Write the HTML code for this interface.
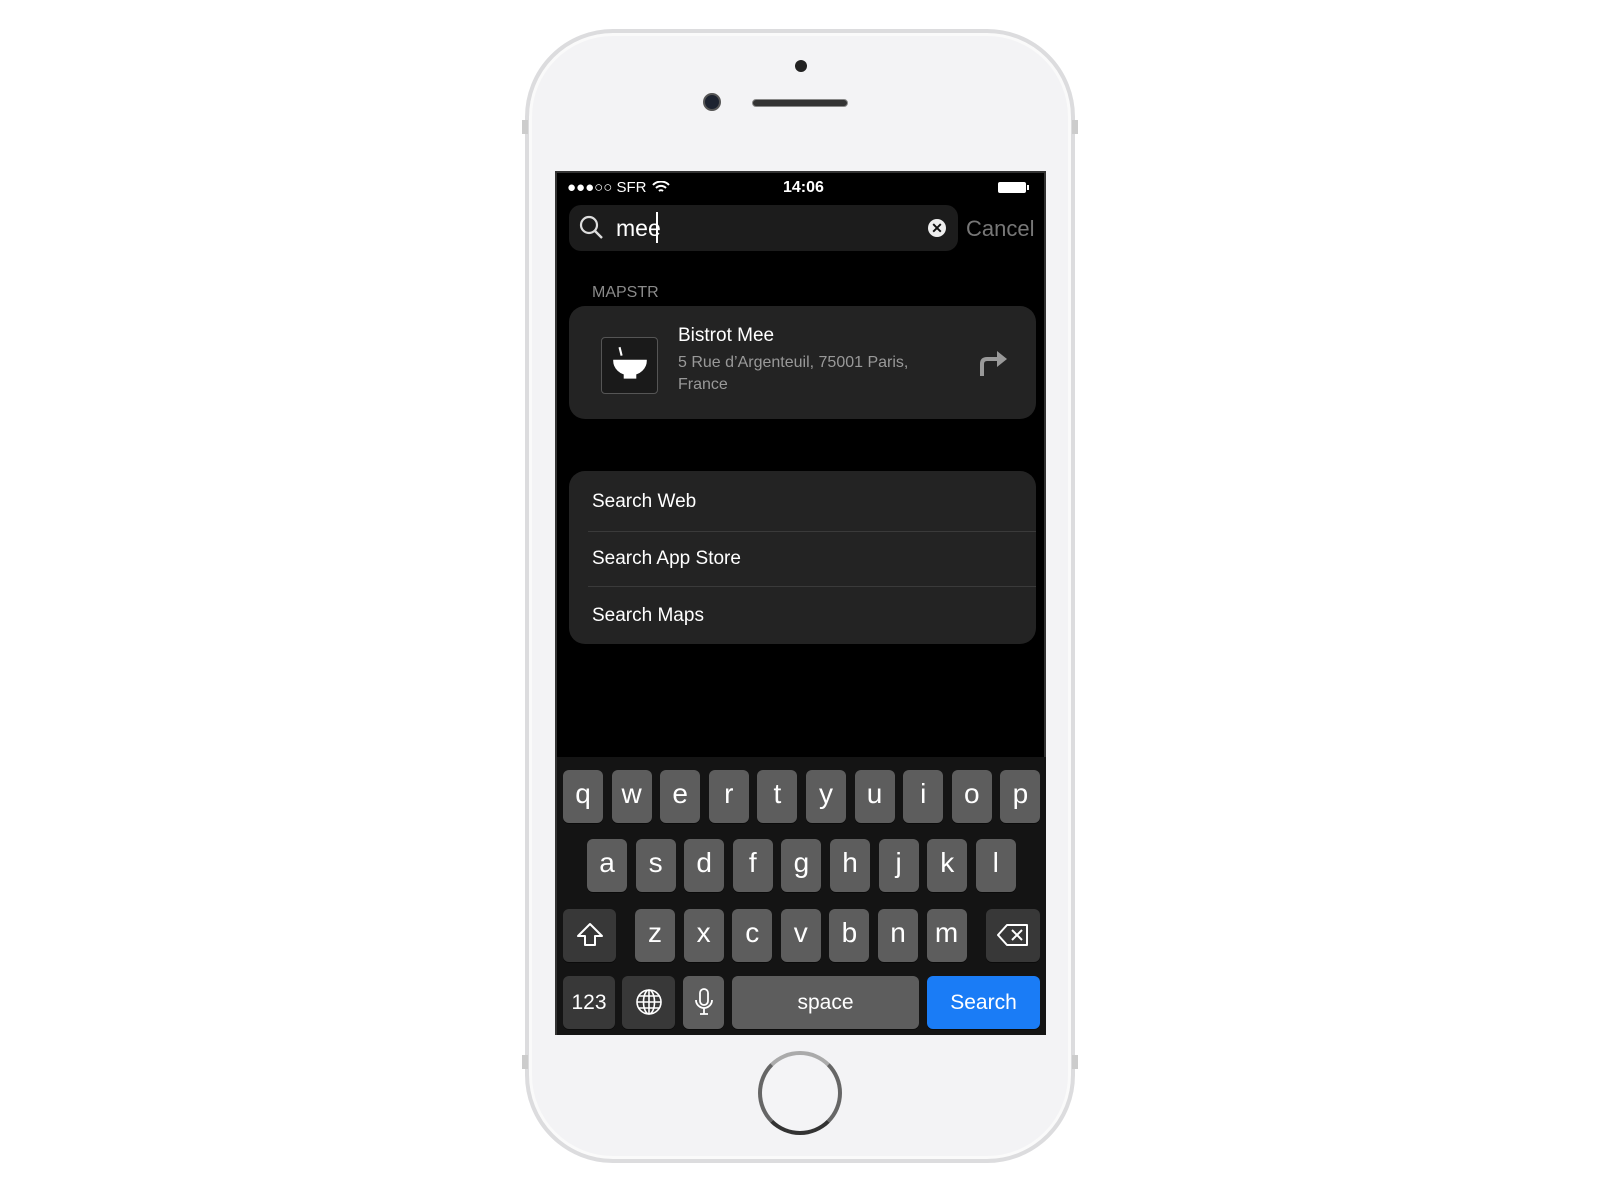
<!DOCTYPE html>
<html><head><meta charset="utf-8"><style>
*{margin:0;padding:0;box-sizing:border-box}
body{width:1600px;height:1200px;background:#fff;position:relative;overflow:hidden;font-family:"Liberation Sans",sans-serif}
.abs{position:absolute}
.phone{left:525px;top:29px;width:550px;height:1134px;border-radius:88px;background:#f3f3f5;border:4px solid #dcdcde;box-shadow:inset 0 0 0 3px #fafafa}
.screen{left:555px;top:171px;width:491px;height:864px;background:#000;border:2px solid #333}
.key{position:absolute;height:53px;background:#5d5d5d;border-radius:6px;color:#fff;font-size:28px;text-align:center;line-height:48px;box-shadow:0 1px 0 #0b0b0b}
.dk{background:#383838}
.t{color:#fff;position:absolute;white-space:nowrap}
</style></head><body>
<div class="abs phone"></div>
<div class="abs" style="left:522px;top:120px;width:6px;height:14px;background:#ccc"></div>
<div class="abs" style="left:522px;top:1055px;width:6px;height:14px;background:#ccc"></div>
<div class="abs" style="left:1072px;top:120px;width:6px;height:14px;background:#ccc"></div>
<div class="abs" style="left:1072px;top:1055px;width:6px;height:14px;background:#ccc"></div>
<div class="abs" style="left:795px;top:60px;width:12px;height:12px;border-radius:50%;background:#222"></div>
<div class="abs" style="left:703px;top:93px;width:18px;height:18px;border-radius:50%;background:#1d2330;border:2px solid #555"></div>
<div class="abs" style="left:752px;top:99px;width:96px;height:8px;border-radius:4px;background:#333;border:1px solid #888"></div>
<div class="abs" style="left:758px;top:1051px;width:84px;height:84px;border-radius:50%;border:4px solid #666;border-top-color:#aaa;border-bottom-color:#333;background:#f4f4f6"></div>

<div class="abs screen">
<div class="t" style="left:10px;top:6px;font-size:15px">●●●○○ SFR</div>
<svg class="abs" style="left:95px;top:8px" width="18" height="13" viewBox="0 0 18 13"><path d="M1 4a11 11 0 0 1 16 0M4 7a7 7 0 0 1 10 0M7 10a3 3 0 0 1 4 0" stroke="#fff" stroke-width="2" fill="none"/></svg>
<div class="t" style="left:226px;top:6px;font-size:16px;font-weight:bold">14:06</div>
<div class="abs" style="left:441px;top:9px;width:28px;height:11px;border-radius:2px;background:#fff"></div>
<div class="abs" style="left:470px;top:12px;width:2px;height:5px;background:#fff"></div>

<div class="abs" style="left:12px;top:32px;width:389px;height:46px;border-radius:12px;background:#1c1c1c"></div>
<svg class="abs" style="left:22px;top:42px" width="26" height="26" viewBox="0 0 26 26"><circle cx="10" cy="10" r="8" stroke="#ddd" stroke-width="2.2" fill="none"/><path d="M16 16l7 7" stroke="#ddd" stroke-width="2.4"/></svg>
<div class="t" style="left:59px;top:42px;font-size:23px">mee</div>
<div class="abs" style="left:99px;top:39px;width:2px;height:31px;background:#fff"></div>
<div class="abs" style="left:371px;top:46px;width:18px;height:18px;border-radius:50%;background:#eee;color:#111;font-size:14px;font-weight:bold;text-align:center;line-height:18px">✕</div>
<div class="t" style="left:409px;top:43px;font-size:22px;color:#777">Cancel</div>

<div class="t" style="left:35px;top:111px;font-size:16px;color:#8a8a8a">MAPSTR</div>
<div class="abs" style="left:12px;top:133px;width:467px;height:113px;border-radius:16px;background:#232323"></div>
<div class="abs" style="left:44px;top:164px;width:57px;height:57px;border:1px solid #555;border-radius:4px;background:#1a1a1a"></div>
<svg class="abs" style="left:51px;top:170px" width="44" height="44" viewBox="0 0 42 42"><path d="M11 4l2 8" stroke="#fff" stroke-width="2"/><path d="M5 16h32a16 14 0 0 1-16 15a16 14 0 0 1-16-15z" fill="#fff"/><rect x="15" y="30" width="12" height="4" fill="#fff"/></svg>
<div class="t" style="left:121px;top:152px;font-size:19px">Bistrot Mee</div>
<div class="t" style="left:121px;top:179px;font-size:16px;color:#999;line-height:22px">5 Rue d’Argenteuil, 75001 Paris,<br>France</div>
<svg class="abs" style="left:420px;top:173px" width="34" height="34" viewBox="0 0 34 34"><path d="M5 30V18q0-5 5-5h12" stroke="#999" stroke-width="4" fill="none"/><path d="M20 5l10 8-10 8z" fill="#999"/></svg>

<div class="abs" style="left:12px;top:298px;width:467px;height:173px;border-radius:16px;background:#232323"></div>
<div class="abs" style="left:31px;top:358px;width:448px;height:1px;background:#3a3a3a"></div>
<div class="abs" style="left:31px;top:413px;width:448px;height:1px;background:#3a3a3a"></div>
<div class="t" style="left:35px;top:318px;font-size:19px">Search Web</div>
<div class="t" style="left:35px;top:375px;font-size:19px">Search App Store</div>
<div class="t" style="left:35px;top:432px;font-size:19px">Search Maps</div>

<div class="abs" style="left:0;top:584px;width:489px;height:278px;background:#141414"></div>
</div>

<div id="kb"></div>
<script>
var kb=document.getElementById('kb'),h='';
function k(x,y,w,txt,cls,st){h+='<div class="key '+(cls||'')+'" style="left:'+x+'px;top:'+y+'px;width:'+w+'px;'+(st||'')+'">'+txt+'</div>';}
'qwertyuiop'.split('').forEach(function(c,i){k(563+i*48.6,770,40,c)});
'asdfghjkl'.split('').forEach(function(c,i){k(587+i*48.6,839,40,c)});
'zxcvbnm'.split('').forEach(function(c,i){k(635+i*48.6,909,40,c)});
k(563,909,53,'<svg width="30" height="28" viewBox="0 0 30 28" style="margin-top:12px"><path d="M15 3L3 15h7v9h10v-9h7z" stroke="#fff" stroke-width="2" fill="none" stroke-linejoin="round"/></svg>','dk');
k(986,909,54,'<svg width="32" height="24" viewBox="0 0 32 24" style="margin-top:14px"><path d="M10 2h20v20H10L1 12z" stroke="#fff" stroke-width="2" fill="none" stroke-linejoin="round"/><path d="M15 7l10 10M25 7L15 17" stroke="#fff" stroke-width="2"/></svg>','dk');
k(563,976,52,'123','dk','font-size:21px;line-height:53px');
k(622,976,53,'<svg width="28" height="28" viewBox="0 0 28 28" style="margin-top:12px"><g stroke="#fff" stroke-width="1.6" fill="none"><circle cx="14" cy="14" r="12"/><ellipse cx="14" cy="14" rx="5.5" ry="12"/><path d="M14 2v24M2 14h24M4 8h20M4 20h20"/></g></svg>','dk');
k(683,976,41,'<svg width="20" height="30" viewBox="0 0 20 30" style="margin-top:11px"><g stroke="#fff" stroke-width="1.8" fill="none"><rect x="6" y="2" width="8" height="16" rx="4"/><path d="M2 13a8 8 0 0 0 16 0M10 21v6M6 27h8"/></g></svg>');
k(732,976,187,'space','','font-size:21px;line-height:53px');
k(927,976,113,'Search','','background:#1a7cf6;font-size:21px;line-height:53px');
kb.innerHTML=h;
</script>
</body></html>
